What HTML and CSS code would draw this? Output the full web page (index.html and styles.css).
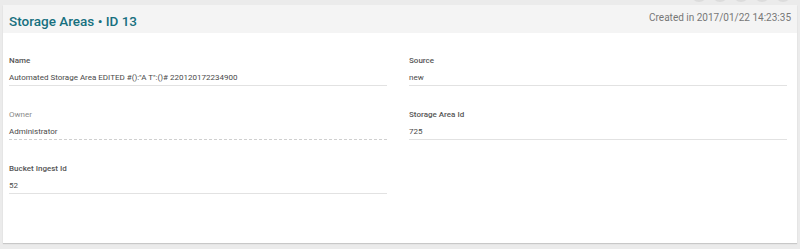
FILE: index.html
```html
<!DOCTYPE html>
<html>
<head>
<meta charset="utf-8">
<link rel="stylesheet" href="styles.css">
</head>
<body>
<div class="toolbar">
  <span class="dot"></span><span class="dot"></span><span class="dot"></span><span class="dot"></span><span class="dot"></span>
</div>
<div class="card">
  <div class="card-header">
    <h1 class="title">Storage Areas • ID 13</h1>
    <span class="created">Created in 2017/01/22 14:23:35</span>
  </div>
  <div class="card-body">
    <div class="field">
      <div class="label">Name</div>
      <div class="value">Automated Storage Area EDITED #():"A T":()# 220120172234900</div>
    </div>
    <div class="field">
      <div class="label">Source</div>
      <div class="value">new</div>
    </div>
    <div class="field field-readonly">
      <div class="label">Owner</div>
      <div class="value">Administrator</div>
    </div>
    <div class="field">
      <div class="label">Storage Area Id</div>
      <div class="value">725</div>
    </div>
    <div class="field">
      <div class="label">Bucket Ingest Id</div>
      <div class="value">52</div>
    </div>
  </div>
</div>
</body>
</html>
```

FILE: styles.css
```css
html, body {
  margin: 0;
  padding: 0;
}
body {
  background: #ebebeb;
  font-family: Roboto, "Liberation Sans", sans-serif;
  width: 800px;
  height: 249px;
  overflow: hidden;
}
.toolbar {
  display: flex;
  justify-content: flex-end;
  gap: 5px;
  padding-right: 9px;
  height: 5px;
  overflow: hidden;
}
.dot {
  width: 16px;
  height: 16px;
  border-radius: 50%;
  background: #dcdcdc;
  margin-top: -14px;
  flex: none;
}
.card {
  margin: 0 3px;
  background: #fff;
  box-shadow: 0 1px 1px rgba(0,0,0,0.15);
  height: 238px;
}
.card-header {
  display: flex;
  justify-content: space-between;
  align-items: flex-start;
  background: #f4f4f4;
  height: 28px;
  padding: 0 6px 0 6px;
  box-sizing: border-box;
}
.title {
  margin: 0;
  font-size: 13.5px;
  font-weight: 500;
  color: #17707f;
  line-height: 16px;
  padding-top: 8px;
}
.created {
  font-size: 10px;
  color: #777;
  line-height: 12px;
  padding-top: 7px;
}
.card-body {
  display: grid;
  grid-template-columns: 378px 378px;
  column-gap: 22px;
  row-gap: 23px;
  padding: 22px 10px 0 6px;
}
.field {
  border-bottom: 1px solid #e2e2e2;
  padding-bottom: 1px;
}
.label {
  font-size: 8px;
  line-height: 12px;
  font-weight: 500;
  color: #555;
}
.value {
  font-size: 8px;
  line-height: 12px;
  color: #4a4a4a;
  margin-top: 5px;
}
.field-readonly {
  border-bottom: 1px dashed #d0d0d0;
}
.field-readonly .label {
  font-weight: 400;
  color: #8a8a8a;
}
```
